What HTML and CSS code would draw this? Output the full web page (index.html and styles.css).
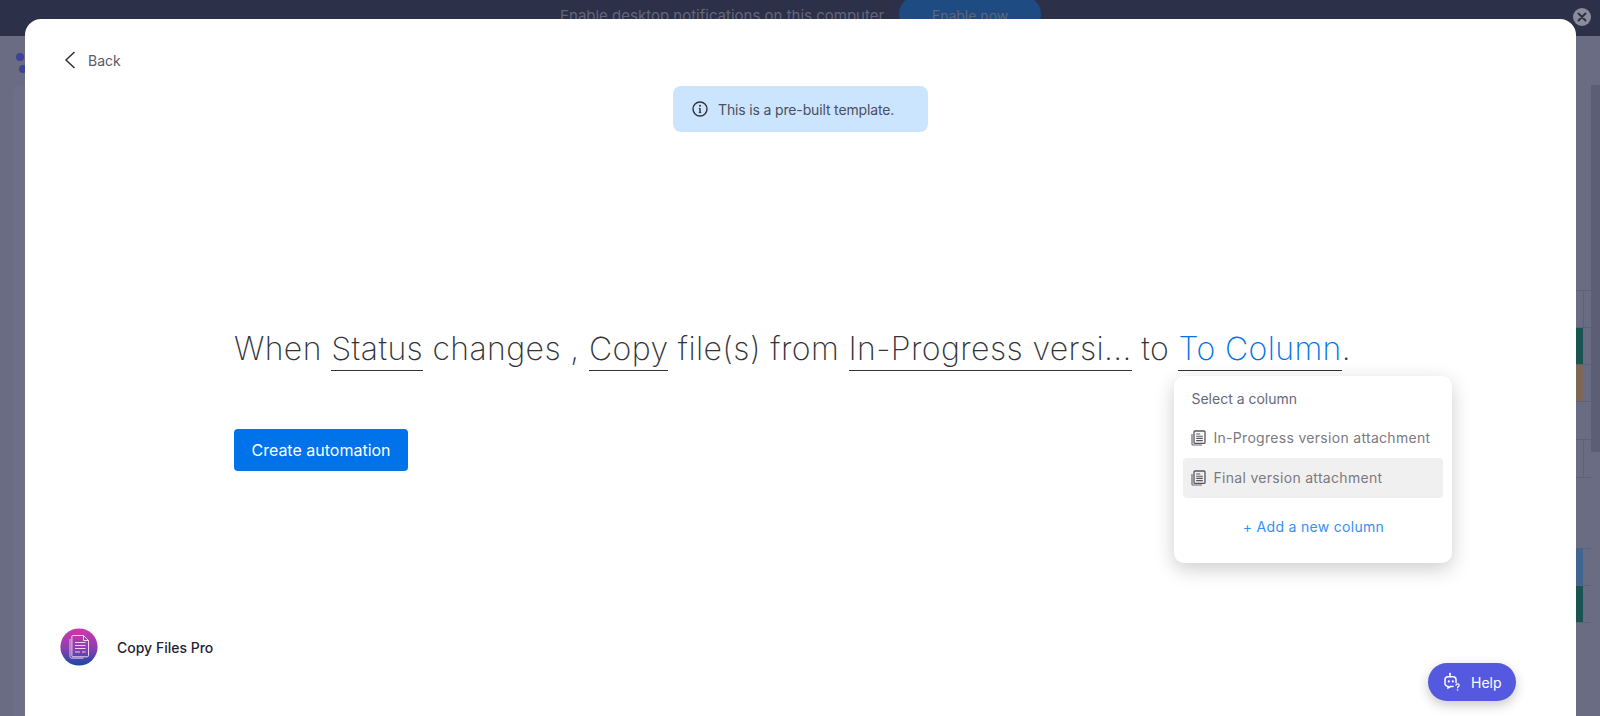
FILE: index.html
```html
<!DOCTYPE html>
<html lang="en">
<head>
    <meta charset="UTF-8">
    <meta name="viewport" content="width=device-width, initial-scale=1.0">
    <title>Copy Files Pro automation</title>
    <link rel="stylesheet" href="styles.css">
</head>
<body>

    <!-- Dimmed app behind the modal -->
    <div class="backdrop">
        <div class="notice-bar">
            <span class="notice-text">Enable desktop notifications on this computer</span>
            <span class="notice-button">Enable now</span>
            <span class="notice-close">
                <svg width="10" height="10" viewBox="0 0 10 10"><path d="M1.5 1.5l7 7M8.5 1.5l-7 7" stroke="#2c3149" stroke-width="2" stroke-linecap="round"/></svg>
            </span>
        </div>
        <div class="app-logo">
            <span class="app-dot"></span>
            <span class="app-dot second"></span>
        </div>
        <div class="app-panel"></div>
        <div class="board-scroll"></div>
        <div class="board-edge">
            <div class="board-row first"></div>
            <div class="board-row green"></div>
            <div class="board-row brown"></div>
            <div class="board-row gap-one"></div>
            <div class="board-row short"></div>
            <div class="board-row gap-two"></div>
            <div class="board-row blue"></div>
            <div class="board-row green"></div>
            <div class="board-row last"></div>
        </div>
    </div>

    <div class="modal">
        <div class="back-link">
            <svg width="12" height="18" viewBox="0 0 12 18"><path d="M10.5 1L2 9l8.5 8" fill="none" stroke="#323338" stroke-width="1.5"/></svg>
            <span>Back</span>
        </div>

        <div class="banner-row">
            <div class="banner">
                <svg width="16" height="16" viewBox="0 0 16 16"><circle cx="8" cy="8" r="7" fill="none" stroke="#323338" stroke-width="1.4"/><circle cx="8" cy="4.8" r="1" fill="#323338"/><path d="M8 7.2v4.4" stroke="#323338" stroke-width="1.5"/><path d="M6.8 7.4H8M6.8 11.6h2.4" stroke="#323338" stroke-width="1"/></svg>
                <span>This is a pre-built template.</span>
            </div>
        </div>

        <div class="recipe">
            <div class="sentence">
                When <span class="field">Status</span> changes , <span class="field">Copy</span> file(s) from <span class="field">In-Progress versi...</span> to <span class="field-wrap"><span class="field active">To Column</span><div class="dropdown">
                    <div class="dropdown-title">Select a column</div>
                    <div class="dropdown-item">
                        <svg class="doc-icon" width="15" height="16" viewBox="0 0 15 16"><path d="M1 4v10.2c0 .5.3.8.8.8h9.2" fill="none" stroke="#6b6b70" stroke-width="1.2"/><rect x="3" y="1" width="11" height="12.4" rx="1" fill="none" stroke="#55565c" stroke-width="1.3"/><path d="M5.2 4h4M5.2 6.2h6.6M5.2 8.4h6.6M5.2 10.6h6.6" stroke="#55565c" stroke-width="1.1"/></svg>
                        <span>In-Progress version attachment</span>
                    </div>
                    <div class="dropdown-item selected">
                        <svg class="doc-icon" width="15" height="16" viewBox="0 0 15 16"><path d="M1 4v10.2c0 .5.3.8.8.8h9.2" fill="none" stroke="#6b6b70" stroke-width="1.2"/><rect x="3" y="1" width="11" height="12.4" rx="1" fill="none" stroke="#55565c" stroke-width="1.3"/><path d="M5.2 4h4M5.2 6.2h6.6M5.2 8.4h6.6M5.2 10.6h6.6" stroke="#55565c" stroke-width="1.1"/></svg>
                        <span>Final version attachment</span>
                    </div>
                    <div class="dropdown-add">+ Add a new column</div>
                </div></span>.
            </div>
            <button class="create-btn">Create automation</button>
        </div>

        <div class="app-credit">
            <svg class="credit-logo" width="38" height="38" viewBox="0 0 38 38">
                <defs>
                    <linearGradient id="logo-fill" x1="0" y1="0" x2="0" y2="1">
                        <stop offset="0" stop-color="#d137ab"/>
                        <stop offset="0.55" stop-color="#8b3fb0"/>
                        <stop offset="1" stop-color="#1449a6"/>
                    </linearGradient>
                </defs>
                <circle cx="19" cy="19" r="18.6" fill="url(#logo-fill)"/>
                <path d="M10 11v17.5c0 1 .6 1.6 1.6 1.6h12" fill="none" stroke="#e6c4ec" stroke-width="1"/>
                <path d="M13 7.5h10.5l5 5v15.2c0 .7-.4 1.1-1.1 1.1H13c-.7 0-1.1-.4-1.1-1.1V8.6c0-.7.4-1.1 1.1-1.1zM23.5 7.5v5h5" fill="none" stroke="#ecd3f0" stroke-width="1"/>
                <path d="M15 14.5h10.5M15 17.5h10.5M15 20.5h10.5M15 24h5M22 24h3.5" stroke="#ecd3f0" stroke-width="1.1"/>
            </svg>
            <span>Copy Files Pro</span>
        </div>

        <div class="help-btn">
            <svg width="20" height="20" viewBox="0 0 20 20"><path d="M7 2.2v2.3M5 4.8h5a3 3 0 0 1 3 3v2.6M10 14.6H7.5L5 16v-1.6A3 3 0 0 1 2 11.4V7.8a3 3 0 0 1 3-3" fill="none" stroke="#fff" stroke-width="1.5" stroke-linecap="round"/><circle cx="7" cy="1.8" r="1" fill="#fff"/><circle cx="5.8" cy="9.4" r="1.1" fill="#fff"/><circle cx="9.8" cy="9.4" r="1.1" fill="#fff"/><path d="M13 13.2c0-1.9 3.2-1.9 3.2 0 0 1.3-1.6 1.2-1.6 2.6" fill="none" stroke="#fff" stroke-width="1.2" stroke-linecap="round"/><circle cx="14.6" cy="18" r=".8" fill="#fff"/></svg>
            <span>Help</span>
        </div>
    </div>

</body>
</html>
```

FILE: styles.css
```css
* {
    box-sizing: border-box;
}
html, body {
    height: 100%;
}
body {
    margin: 0;
    overflow: hidden;
    font-family: Inter, "Noto Sans", sans-serif;
    background-color: #696c82;
    position: relative;
}

/* Backdrop */
.backdrop {
    height: 716px;
    position: relative;
    overflow: hidden;
}
.notice-bar {
    height: 36px;
    background-color: #2c3149;
    display: flex;
    padding-left: 560px;
    color: #63667a;
    font-size: 15px;
}
.notice-text {
    line-height: 31px;
    width: 339px;
    white-space: nowrap;
}
.notice-button {
    width: 142px;
    height: 36px;
    margin-top: -4px;
    padding-top: 4px;
    line-height: 31px;
    font-size: 14px;
    text-align: center;
    border-radius: 18px;
    background-color: #1d4b82;
}
.notice-close {
    position: absolute;
    left: 1573px;
    top: 8px;
    width: 18px;
    height: 18px;
    border-radius: 50%;
    background-color: #8a8c9c;
    display: flex;
    align-items: center;
    justify-content: center;
}
.app-logo {
    position: absolute;
    left: 16px;
    top: 53px;
}
.app-dot {
    display: block;
    width: 8px;
    height: 8px;
    border-radius: 50%;
    background-color: #3f4396;
}
.app-dot.second {
    margin: 4px 0 0 3px;
}
.app-panel {
    position: absolute;
    left: 13px;
    top: 85px;
    width: 30px;
    height: 640px;
    border-radius: 8px 0 0 0;
    background-color: #6c6f85;
}
.board-scroll {
    position: absolute;
    left: 1591px;
    top: 85px;
    width: 9px;
    height: 367px;
    background-color: #5b5e77;
}
.board-edge {
    position: absolute;
    left: 1576px;
    top: 290px;
    width: 15px;
}
.board-row {
    height: 37px;
    border-top: 1px solid #5d6076;
}
.board-row.first, .board-row.short {
    background: linear-gradient(#5d6076, #5d6076) 7px 0 / 1px 100% no-repeat;
}
.board-row.green {
    background: linear-gradient(#1a5450, #1a5450) 0 0 / 7px 100% no-repeat;
}
.board-row.brown {
    background: linear-gradient(#7f6757, #7f6757) 0 0 / 7px 100% no-repeat;
}
.board-row.blue {
    background: linear-gradient(#3f6690, #3f6690) 0 0 / 7px 100% no-repeat;
}
.board-row.gap-one {
    height: 38px;
}
.board-row.short {
    height: 38px;
}
.board-row.gap-two {
    height: 71px;
}

/* Modal */
.modal {
    position: absolute;
    left: 25px;
    top: 19px;
    width: 1551px;
    height: 720px;
    background-color: #ffffff;
    border-radius: 16px 16px 0 0;
    padding: 32px 0 0 39px;
}
.back-link {
    display: flex;
    align-items: center;
    gap: 12px;
    height: 18px;
    color: #585a68;
    font-size: 14px;
}
.banner-row {
    display: flex;
    justify-content: center;
    margin: 17px 0 0 -39px;
}
.banner {
    width: 255px;
    height: 46px;
    border-radius: 8px;
    background-color: #cce5ff;
    color: #4b4e60;
    font-size: 14px;
    letter-spacing: -0.15px;
    display: flex;
    align-items: center;
    gap: 10px;
    padding-left: 19px;
}
.recipe {
    margin: 197px 0 0 170px;
}
.sentence {
    font-weight: 250;
    font-size: 32px;
    letter-spacing: 0.39px;
    line-height: 40px;
    color: #323338;
    white-space: nowrap;
}
.field {
    display: inline-block;
    border-bottom: 1.5px solid #323338;
    line-height: 39px;
    height: 42px;
}
.field.active {
    color: #0073ea;
}
.field-wrap {
    position: relative;
    display: inline-block;
}
.dropdown {
    position: absolute;
    left: -4px;
    top: 47px;
    width: 278px;
    height: 187px;
    background-color: #ffffff;
    border-radius: 10px;
    box-shadow: 0 6px 20px rgba(0, 0, 0, 0.2);
    padding: 14px 9px 0;
    font-weight: 400;
    letter-spacing: 0;
}
.dropdown-title {
    font-size: 14px;
    line-height: 18px;
    color: #676879;
    padding-left: 8px;
    margin-bottom: 10px;
}
.dropdown-item {
    height: 40px;
    display: flex;
    align-items: center;
    gap: 7px;
    padding-left: 8px;
    font-size: 14px;
    letter-spacing: 0.3px;
    color: #7a7a7f;
    border-radius: 4px;
}
.dropdown-item.selected {
    background-color: #f0f0f0;
}
.dropdown-add {
    margin-top: 19px;
    text-align: center;
    font-size: 14px;
    letter-spacing: 0.3px;
    line-height: 20px;
    color: #3391f0;
}
.create-btn {
    display: block;
    margin-top: 58px;
    width: 174px;
    height: 42px;
    border: none;
    border-radius: 4px;
    background-color: #0073ea;
    color: #ffffff;
    font-family: Inter, "Noto Sans", sans-serif;
    font-size: 16px;
}
.app-credit {
    position: absolute;
    left: 35px;
    top: 609px;
    display: flex;
    align-items: center;
    gap: 19px;
    font-size: 14px;
    font-weight: 500;
    color: #1f2233;
}
.credit-logo {
    display: block;
}
.help-btn {
    position: absolute;
    left: 1403px;
    top: 644px;
    width: 88px;
    height: 38px;
    border-radius: 19px;
    background-color: #5559df;
    box-shadow: 0 4px 12px rgba(0, 0, 0, 0.22);
    color: #ffffff;
    font-size: 14px;
    display: flex;
    align-items: center;
    gap: 8px;
    padding-left: 15px;
}
```
